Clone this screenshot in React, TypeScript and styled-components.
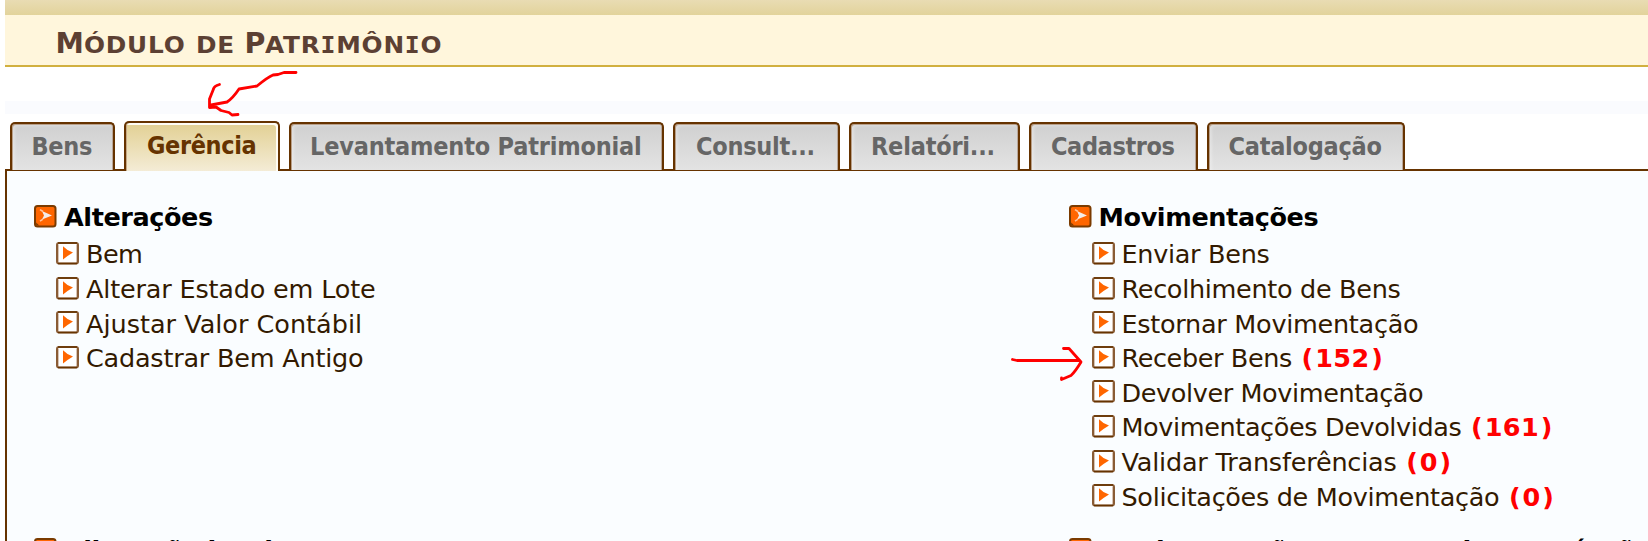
import React from 'react';
import styled, { createGlobalStyle, css } from 'styled-components';

const GlobalStyle = createGlobalStyle`
  * { box-sizing: border-box; }
  body { margin: 0; background: #fff; overflow: hidden; }
`;

const Page = styled.div`
  position: relative;
  height: 541px;
  padding-left: 5px;
  overflow: hidden;
  font-family: 'DejaVu Sans', Verdana, sans-serif;
`;

const TopBand = styled.div`
  height: 15px;
  background: linear-gradient(#e9dcb3, #e2d39b);
`;

const Header = styled.header`
  height: 52px;
  padding-left: 50.5px;
  background: #fff6dc;
  border-bottom: 2px solid #d1b03f;
`;

const Title = styled.h1`
  display: flex;
  align-items: baseline;
  margin: 0;
  color: #5c4033;
  font-size: 28.5px;
  font-weight: bold;
  line-height: 58px;
  white-space: nowrap;
`;

const Initial = styled.span<{ $advance: number }>`
  width: ${(p) => p.$advance}px;
`;

const SmallCaps = styled.span<{ $after?: number }>`
  margin-right: ${(p) => p.$after ?? 0}px;
  font-size: 22.5px;
  letter-spacing: 0.7px;
  text-transform: uppercase;
  transform: scaleX(1.1);
  transform-origin: left;
`;

const Serifed = styled.span`
  font-family: 'DejaVu Sans Mono', monospace;
`;

const Strip = styled.div`
  height: 13px;
  margin-top: 34px;
  background: #fafbfe;
`;

const TabBar = styled.nav`
  position: relative;
  z-index: 1;
  display: flex;
  align-items: flex-end;
  gap: 9px;
  height: 57px;
  padding-left: 5px;
`;

const Tab = styled.a<{ $width: number; $inset: number; $tracking: number; $active?: boolean }>`
  width: ${(p) => p.$width}px;
  height: 48px;
  margin-bottom: 1px;
  padding-left: ${(p) => p.$inset - 2}px;
  border: 2px solid #663300;
  border-bottom: 0;
  border-radius: 5px 5px 0 0;
  background: linear-gradient(#d0d0d0, #e3e3e3);
  box-shadow: inset 1px 1px 0 #b9a08a, inset -1px 0 0 #b9a79a, inset 3px 2px 3px rgba(255, 255, 255, 0.3);
  color: #666;
  font: bold 25px/46px 'DejaVu Sans Condensed', 'DejaVu Sans', Tahoma, sans-serif;
  font-stretch: condensed;
  letter-spacing: ${(p) => p.$tracking}px;
  white-space: nowrap;
  ${(p) =>
    p.$active &&
    css`
      height: 50px;
      margin-bottom: 0;
      background: linear-gradient(#e2d093, #f4ecd6);
      box-shadow: inset 1px 0 0 #c5a987, inset -2px 2px 0 #fffdf5;
      color: #663300;
    `}
`;

const Panel = styled.main`
  display: grid;
  grid-template-columns: 1035px 1fr;
  grid-template-rows: 333px auto;
  height: 400px;
  margin-top: -2px;
  padding: 29.4px 0 0 27px;
  border: solid #663300;
  border-width: 2px 0 0 2px;
  background: #fafdff;
`;

const Group = styled.section`
  min-width: 0;
`;

const GroupTitle = styled.h2<{ $tracking: number; $gap: number }>`
  display: flex;
  gap: ${(p) => p.$gap}px;
  height: 37px;
  margin: 0;
  color: #000;
  font-size: 25.5px;
  font-weight: bold;
  line-height: 34.6px;
  letter-spacing: ${(p) => p.$tracking}px;
  white-space: nowrap;
`;

const List = styled.ul<{ $indent: number }>`
  margin: 0;
  padding: 0 0 0 ${(p) => p.$indent}px;
  list-style: none;
`;

const Item = styled.li<{ $tracking: number; $gap: number }>`
  display: flex;
  gap: ${(p) => p.$gap}px;
  height: 34.6px;
  color: #331a00;
  font-size: 25.5px;
  line-height: 34.6px;
  letter-spacing: ${(p) => p.$tracking}px;
  white-space: nowrap;
`;

const Count = styled.strong`
  margin-left: 9.6px;
  color: #f00;
  letter-spacing: 0.4px;
`;

const Digits = styled.span`
  margin: 0 1.6px;
`;

const Bullet = styled.svg`
  flex: none;
  width: 23px;
  height: 23px;
  margin-top: 4.6px;
`;

const Annotations = styled.svg`
  position: absolute;
  z-index: 2;
  inset: 0;
  width: 1648px;
  height: 541px;
  fill: none;
  stroke: #ff0000;
  stroke-width: 2.8;
  stroke-linecap: round;
  stroke-linejoin: round;
  pointer-events: none;
`;

const GroupIcon = () => (
  <Bullet viewBox="0 0 23 23">
    <rect x="1" y="1" width="20.5" height="20.5" rx="2.5" fill="#ff6600" stroke="#7a3b00" strokeWidth="2" />
    <path d="M2.2 17.5v3h3z" fill="#7a3b00" />
    <path d="M8 6 18 10.5 8 14.5l2-4z" fill="#f4ece8" />
    <path d="M6 4.6 9 6.5M6 16.2 9 14.2" stroke="#ffc39a" strokeWidth="1.6" />
  </Bullet>
);

const ItemIcon = () => (
  <Bullet viewBox="0 0 23 23">
    <rect x="1" y="1" width="21" height="20.5" rx="2" fill="#fff" stroke="#8a5c35" strokeWidth="2" />
    <path d="M2 1h19M2 21.5h19" stroke="#663300" strokeWidth="1.6" />
    <path d="M2.5 3v17M20.5 3v17" stroke="#d8c4b4" strokeWidth="1" />
    <path d="M7 4.2 11.5 8 17 10.6 11.5 14 7 17.5z" fill="#ff6600" />
  </Bullet>
);

const tabs = [
  { label: 'Bens', width: 105, inset: 21.5, tracking: -0.3 },
  { label: 'Gerência', width: 156, inset: 23, tracking: -0.374, active: true },
  { label: 'Levantamento Patrimonial', width: 375, inset: 21, tracking: -0.193 },
  { label: 'Consult...', width: 167, inset: 23, tracking: -0.27 },
  { label: 'Relatóri...', width: 171, inset: 22, tracking: -0.205 },
  { label: 'Cadastros', width: 169, inset: 22, tracking: -0.393 },
  { label: 'Catalogação', width: 198, inset: 21.5, tracking: -0.254 },
];

type Entry = { label: string; tracking: number; count?: number };

const changes: Entry[] = [
  { label: 'Bem', tracking: -0.59 },
  { label: 'Alterar Estado em Lote', tracking: -0.182 },
  { label: 'Ajustar Valor Contábil', tracking: 0 },
  { label: 'Cadastrar Bem Antigo', tracking: -0.223 },
];

const movements: Entry[] = [
  { label: 'Enviar Bens', tracking: -0.3 },
  { label: 'Recolhimento de Bens', tracking: -0.312 },
  { label: 'Estornar Movimentação', tracking: -0.282 },
  { label: 'Receber Bens', tracking: -0.389, count: 152 },
  { label: 'Devolver Movimentação', tracking: -0.385 },
  { label: 'Movimentações Devolvidas', tracking: -0.386, count: 161 },
  { label: 'Validar Transferências', tracking: -0.201, count: 0 },
  { label: 'Solicitações de Movimentação', tracking: -0.319, count: 0 },
];

const Entries = ({ items, gap, indent }: { items: Entry[]; gap: number; indent: number }) => (
  <List $indent={indent}>
    {items.map((item) => (
      <Item key={item.label} $tracking={item.tracking} $gap={gap}>
        <ItemIcon />
        <div>
          {item.label}
          {item.count !== undefined && (
            <Count>
              (<Digits>{item.count}</Digits>)
            </Count>
          )}
        </div>
      </Item>
    ))}
  </List>
);

export default function App() {
  return (
    <Page>
      <GlobalStyle />
      <TopBand />
      <Header>
        <Title>
          <Initial $advance={28}>M</Initial>
          <SmallCaps $after={20}>ódulo</SmallCaps>
          <SmallCaps $after={13.3}>de</SmallCaps>
          <Initial $advance={20}>P</Initial>
          <SmallCaps>
            atr<Serifed>i</Serifed>môn<Serifed>i</Serifed>o
          </SmallCaps>
        </Title>
      </Header>
      <Strip />
      <TabBar>
        {tabs.map((tab) => (
          <Tab key={tab.label} $width={tab.width} $inset={tab.inset} $tracking={tab.tracking} $active={tab.active}>
            {tab.label}
          </Tab>
        ))}
      </TabBar>
      <Panel>
        <Group>
          <GroupTitle $tracking={-0.408} $gap={7}>
            <GroupIcon />
            Alterações
          </GroupTitle>
          <Entries items={changes} gap={7} indent={22} />
        </Group>
        <Group>
          <GroupTitle $tracking={-0.384} $gap={6.5}>
            <GroupIcon />
            Movimentações
          </GroupTitle>
          <Entries items={movements} gap={6.5} indent={23} />
        </Group>
        <Group>
          <GroupTitle $tracking={-0.5} $gap={7}>
            <GroupIcon />
            Alienação local
          </GroupTitle>
        </Group>
        <Group>
          <GroupTitle $tracking={-0.3} $gap={6.5}>
            <GroupIcon />
            Prod. remoção e recurso de seus órgãos
          </GroupTitle>
        </Group>
      </Panel>
      <Annotations viewBox="0 0 1648 541">
        <path d="M296 72.5 284 72.5 278 74.5 273 75Q268 77 257 86L239 89Q233 98 227 102L211 105" />
        <path d="M219.5 84.5Q214 86 213.5 89L209.5 99V107.5L216 107 221 110.5 229 112.5 232 115 238 114.5" />
        <path d="M1012.5 359.5 1017 360.5H1079" />
        <path d="M1063.5 348.5 1069 348.5Q1073 353 1081 362Q1075 372 1071 375.5L1061.5 379.5V378" />
      </Annotations>
    </Page>
  );
}
